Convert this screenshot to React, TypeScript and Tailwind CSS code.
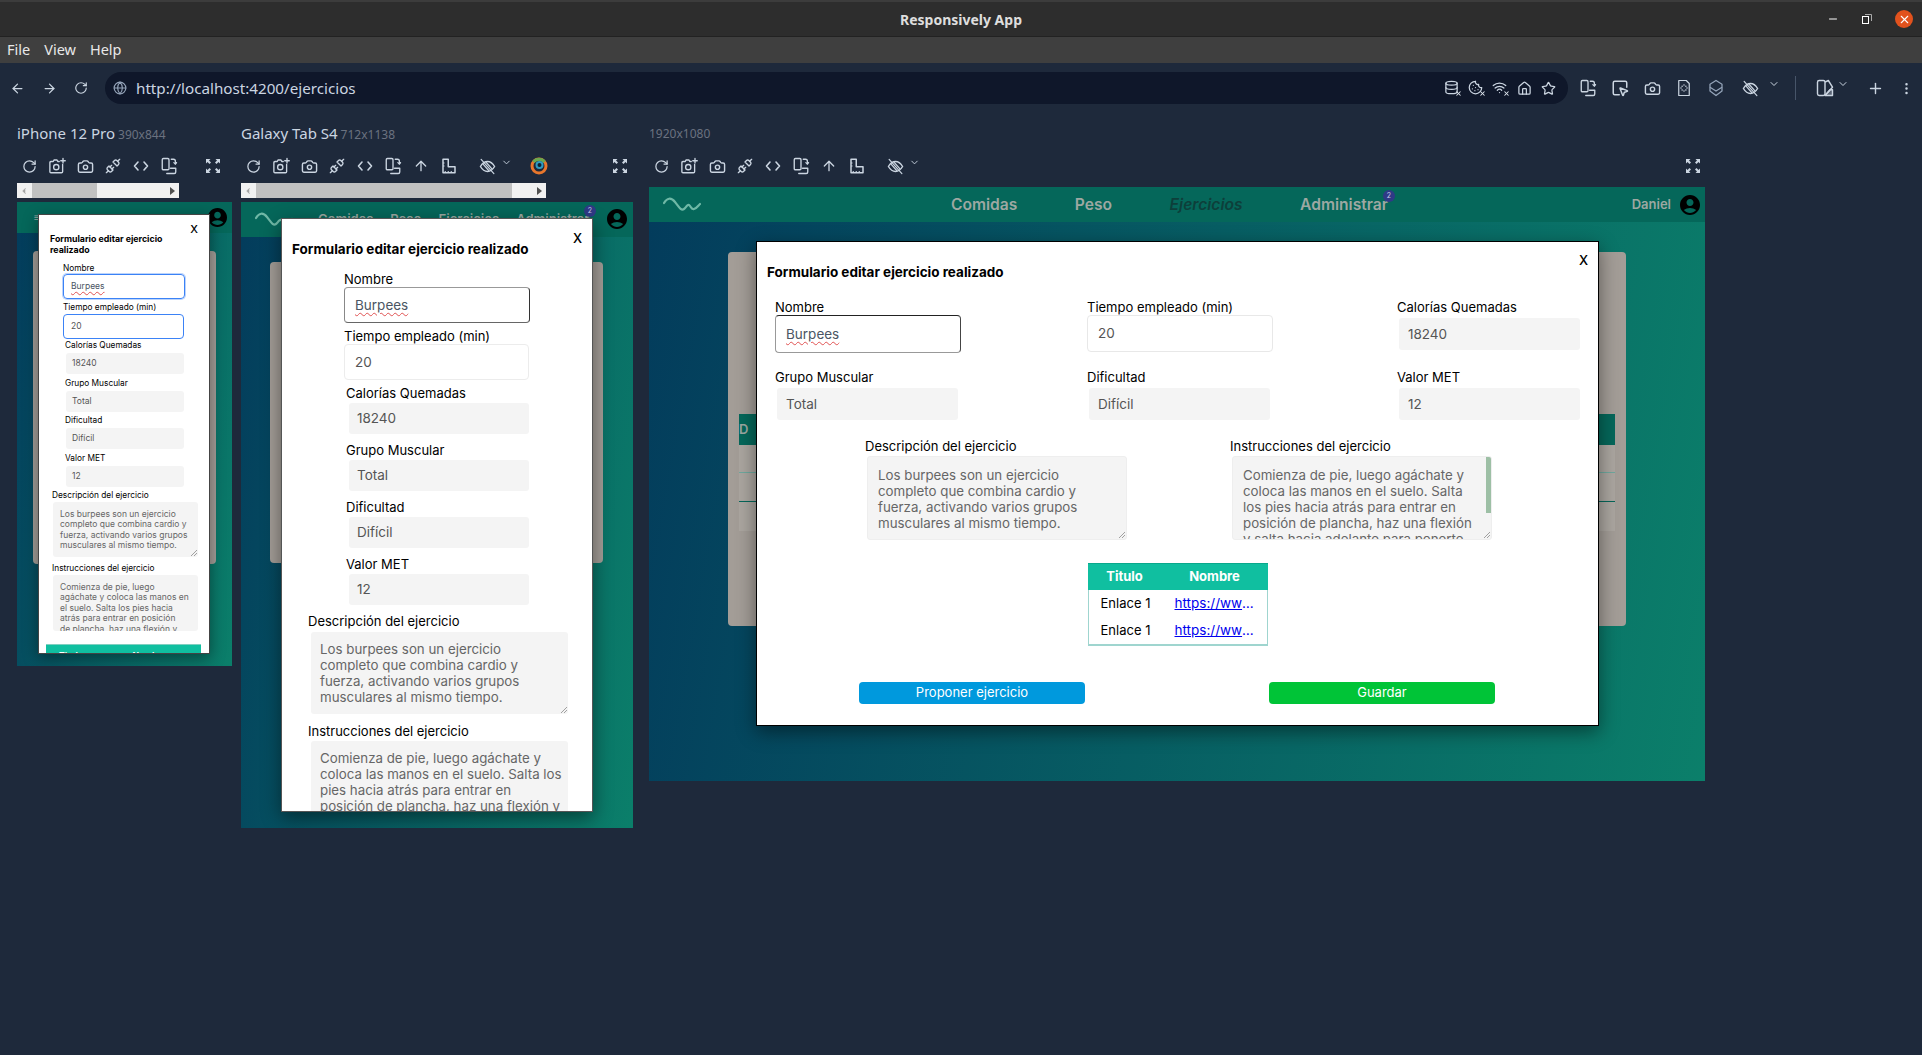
// @ts-nocheck
import { ArrowLeft, ArrowRight, RotateCw, Globe, Star, House, Camera, Unplug, ChevronDown, ChevronLeft, Plus, EllipsisVertical, ArrowUp, Database, Cookie, Wifi, SquareMousePointer, Minus, X } from "lucide-react"

const UI = "font-['Inter','Noto_Sans',sans-serif]"
const CHROME = "font-['Noto_Sans',sans-serif]"

function RotateIcon({ size = 18 }) {
  return (
    <svg width={size} height={size} viewBox="0 0 24 24" fill="none" stroke="currentColor" strokeWidth="1.8" strokeLinecap="round" strokeLinejoin="round">
      <rect x="3" y="2" width="9" height="15" rx="1.5" />
      <path d="M15 3h3a2.500 2.500 0 0 1 2.500 2.500V9" />
      <path d="M18.500 7.500 20.500 9.500 22 7.500" />
      <path d="M9 22h10a2 2 0 0 0 2-2v-5h-7" />
    </svg>
  )
}

function ShotIcon({ size = 18 }) {
  return (
    <svg width={size} height={size} viewBox="0 0 24 24" fill="none" stroke="currentColor" strokeWidth="1.8" strokeLinecap="round" strokeLinejoin="round">
      <path d="M15 6h-2l-1-2H8L7 6H4a1.500 1.500 0 0 0-1.500 1.500v12A1.500 1.500 0 0 0 4 21h14a1.500 1.500 0 0 0 1.500-1.500V10" />
      <circle cx="11" cy="13.500" r="3.500" />
      <path d="M20 2v6M17 5h6" />
    </svg>
  )
}

function RulerIcon({ size = 18 }) {
  return (
    <svg width={size} height={size} viewBox="0 0 24 24" fill="none" stroke="currentColor" strokeWidth="2" strokeLinejoin="round">
      <path d="M4 3h7v10h9v8H4z" />
      <path d="M7 21v-2.500M11 21v-2.500M15 21v-2.500M4 8h2M4 12h2" strokeWidth="1.500" />
    </svg>
  )
}

function CodeIcon() {
  return (
    <svg width="16" height="16" viewBox="0 0 16 16" fill="none" stroke="currentColor" strokeWidth="1.600" strokeLinecap="round" strokeLinejoin="round">
      <path d="M5 4 1.500 8 5 12M11 4l3.500 4-3.500 4" />
    </svg>
  )
}

function EyeHatch({ size = 17 }) {
  return (
    <svg width={size} height={size} viewBox="0 0 24 24" fill="none" stroke="currentColor" strokeWidth="2" strokeLinecap="round">
      <path d="M2 12c3-5 6.500-7 10-7s7 2 10 7c-3 5-6.500 7-10 7s-7-2-10-7z" />
      <path d="M3 2l18 20M6 9l8 9M10 6l8 9" strokeWidth="1.700" />
    </svg>
  )
}

function DocDots() {
  return (
    <svg width="18" height="18" viewBox="0 0 24 24" fill="none" stroke="currentColor" strokeWidth="1.600" strokeLinejoin="round">
      <path d="M5 2h10l4 4v16H5z" />
      <path d="M12 8v.01M12 16v.01M8 12v.01M16 12v.01M9.500 9.500v.01M14.500 9.500v.01M9.500 14.500v.01M14.500 14.500v.01" strokeWidth="2" strokeLinecap="round" />
    </svg>
  )
}

function StackIcon() {
  return (
    <svg width="18" height="18" viewBox="0 0 24 24" fill="none" stroke="#94a3b8" strokeWidth="1.700" strokeLinejoin="round">
      <path d="M12 2l8 5v4l-8 5-8-5V7z" />
      <path d="M4 11v5l8 6 8-6v-5" />
    </svg>
  )
}

function ThemeIcon() {
  return (
    <svg width="20" height="20" viewBox="0 0 24 24" fill="none" stroke="currentColor" strokeWidth="1.700" strokeLinejoin="round">
      <rect x="3" y="3" width="9" height="18" rx="2" />
      <path d="M12 5l4-2 5 8-9 10" />
      <path d="M12 21h9v-7h-3z" fill="currentColor" fillOpacity="0.350" />
    </svg>
  )
}

function XBadge({ icon: Icon }) {
  return (
    <span className="relative w-4 h-4 flex">
      <Icon size={15} />
      <X size={7} strokeWidth={3.500} className="absolute -right-[2px] -bottom-[1px] text-[#e2e8f0]" />
    </span>
  )
}

function Expand() {
  return (
    <svg width="14" height="14" viewBox="0 0 14 14" fill="#cbd5e1">
      <path d="M0 0h4.500L3 1.500l2 2L3.500 5l-2-2L0 4.500zM14 0v4.500L12.500 3l-2 2L9 3.500l2-2L9.500 0zM0 14V9.500L1.500 11l2-2L5 10.500l-2 2L4.500 14zM14 14H9.500l1.500-1.500-2-2L10.500 9l2 2L14 9.500z" />
    </svg>
  )
}

function ColorBlind() {
  return (
    <svg width="18" height="18" viewBox="0 0 18 18" fill="none" strokeWidth="3">
      <circle cx="9" cy="9" r="7" stroke="#e8762c" />
      <path d="M3.500 5A7 7 0 0 1 14.500 5" stroke="#6aa84f" />
      <circle cx="9.500" cy="8" r="3" stroke="#2f9bc2" strokeWidth="2" fill="#10202e" />
    </svg>
  )
}

function Avatar({ size }) {
  return (
    <svg width={size} height={size} viewBox="2 2 20 20" fill="#000">
      <path d="M12 2C6.480 2 2 6.480 2 12s4.480 10 10 10 10-4.480 10-10S17.520 2 12 2zm0 4c1.930 0 3.500 1.570 3.500 3.500S13.930 13 12 13s-3.500-1.570-3.500-3.500S10.070 6 12 6zm0 14c-2.030 0-4.430-.82-6.140-2.880C7.550 15.800 9.680 15 12 15s4.450.8 6.140 2.120C16.430 19.180 14.030 20 12 20z" />
    </svg>
  )
}

function Wave({ className }) {
  return (
    <svg className={className} width="38" height="18" viewBox="0 0 38 18" fill="none" stroke="#6fb8a6" strokeWidth="2.200" strokeLinecap="round">
      <path d="M1 7C4 2 8 1 12 6s6 9 9 7 3-5 5-4 2 5 5 4 4-3 6-5" />
    </svg>
  )
}

function DeviceTools({ extra, expandClass }) {
  const btn = "w-7 flex justify-center"
  return (
    <div className="h-[26px] flex items-center -ml-[2px] text-[#cbd5e1]">
      <span className={btn}><RotateCw size={15} /></span>
      <span className={btn}><ShotIcon /></span>
      <span className={btn}><Camera size={17} /></span>
      <span className={btn}><Unplug size={16} /></span>
      <span className={btn}><CodeIcon /></span>
      <span className={btn}><RotateIcon /></span>
      {extra}
      <span className={`ml-auto w-7 flex justify-center ${expandClass}`}><Expand /></span>
    </div>
  )
}

function ExtraTools({ color }) {
  return (
    <>
      <span className="w-7 flex justify-center"><ArrowUp size={16} /></span>
      <span className="w-7 flex justify-center"><RulerIcon /></span>
      <span className="w-[38px] pl-[10px] flex justify-center"><EyeHatch /></span>
      <ChevronDown size={11} className="-mt-2" />
      {color && <span className="ml-[18px] flex"><ColorBlind /></span>}
    </>
  )
}

function HScroll({ width, thumbLeft, thumbWidth }) {
  return (
    <div className={`${width} h-[15px] mt-1 mb-1 bg-[#f1f1f1] flex items-center`}>
      <ChevronLeft size={10} className="text-[#a3a3a3] fill-[#a3a3a3] ml-[2px] shrink-0" />
      <div className={`${thumbLeft} ${thumbWidth} h-full bg-[#c1c1c1] shrink-0`} />
      <span className="ml-auto mr-1 w-0 h-0 border-y-[4px] border-y-transparent border-l-[5px] border-l-[#505050]" />
    </div>
  )
}

function SiteNav({ children, height }) {
  return <div className={`${height} shrink-0 bg-[#05675a] flex items-center relative text-[#9da8a2]`}>{children}</div>
}

function Badge({ className }) {
  return <span className={`absolute w-3 h-3 rounded-full bg-[#2f3a86] text-[#c7cbe8] text-[7px] leading-3 text-center ${className}`}>2</span>
}

function Label({ children, className = "" }) {
  return <div className={`text-black leading-4 whitespace-nowrap ${className}`}>{children}</div>
}

function Edit({ children, className = "" }) {
  return <div className={`rounded-[3px] flex items-center text-[#555] whitespace-nowrap ${className}`}>{children}</div>
}

function Squiggle({ children }) {
  return <span className="underline decoration-wavy decoration-[#e05252] decoration-1 underline-offset-2 text-[#4b5563]">{children}</span>
}

function Grip() {
  return (
    <svg className="absolute right-[1px] bottom-[1px]" width="6" height="6" viewBox="0 0 6 6" stroke="#8a8a8a" strokeWidth="0.8">
      <path d="M6 0 0 6M6 3 3 6" />
    </svg>
  )
}

const DESC = "Los burpees son un ejercicio\ncompleto que combina cardio y\nfuerza, activando varios grupos\nmusculares al mismo tiempo."
const INST_PHONE = "Comienza de pie, luego\nagáchate y coloca las manos en\nel suelo. Salta los pies hacia\natrás para entrar en posición\nde plancha, haz una flexión y"
const INST_TABLET = "Comienza de pie, luego agáchate y\ncoloca las manos en el suelo. Salta los\npies hacia atrás para entrar en\nposición de plancha, haz una flexión y\nsalta hacia adelante para ponerte"
const INST_DESK = "Comienza de pie, luego agáchate y\ncoloca las manos en el suelo. Salta\nlos pies hacia atrás para entrar en\nposición de plancha, haz una flexión\ny salta hacia adelante para ponerte"

function PhoneForm() {
  const gray = "w-[118px] h-[21px] ml-[3px] mt-[1px] mb-[2.500px] bg-[#f4f4f4] pl-[6px] text-[8.500px]"
  const item = "text-[8.300px] ml-[2px] leading-[13px]"
  const area = "w-[145px] ml-[1px] px-[7px] pt-[7px] overflow-hidden bg-[#f4f4f4] rounded-[3px] text-[#666] text-[8.500px] leading-[10.400px] whitespace-pre"
  return (
    <div className="absolute left-[21px] top-[12px] w-[172px] h-[440px] overflow-hidden bg-white border border-[#444] shadow-[0_4px_14px_rgba(0,0,0,0.4)] flex flex-col pt-[18px]">
      <div className="relative pl-[11px] pr-[30px] font-bold text-[8.800px] leading-[11px] text-black">
        Formulario editar ejercicio realizado
        <span className="absolute right-[11px] -top-[9px] text-[11px] font-medium">X</span>
      </div>
      <div className="pl-[24px] mt-[7px] w-[148px] flex flex-col">
        <Label className="text-[8.300px] leading-[12px]">Nombre</Label>
        <Edit className="w-[122px] h-[25px] border border-[#3b82f6] ring-1 ring-[#bcd4fb] rounded-[4px] pl-[7px] text-[8.500px]"><Squiggle>Burpees</Squiggle></Edit>
        <Label className="text-[8.300px] leading-[14px] mt-[1px]">Tiempo empleado (min)</Label>
        <Edit className="w-[121px] h-[25px] border border-[#3b82f6] rounded-[4px] pl-[7px] text-[8.500px]">20</Edit>
        <Label className={item}>Calorías Quemadas</Label>
        <Edit className={gray}>18240</Edit>
        <Label className={item}>Grupo Muscular</Label>
        <Edit className={gray}>Total</Edit>
        <Label className={item}>Dificultad</Label>
        <Edit className={gray}>Difícil</Edit>
        <Label className={item}>Valor MET</Label>
        <Edit className={gray}>12</Edit>
      </div>
      <div className="pl-[13px] flex flex-col">
        <Label className="text-[8.300px] leading-[13px]">Descripción del ejercicio</Label>
        <div className={`relative h-[55px] ${area}`}>
          {DESC}
          <Grip />
        </div>
        <Label className="text-[8.300px] leading-[13px] mt-[5px]">Instrucciones del ejercicio</Label>
        <div className={`h-[56px] ${area}`}>{INST_PHONE}</div>
      </div>
      <div className="ml-[7px] mt-[13px] w-[155px] grid grid-cols-2 bg-[#10bfa0] border-t border-[#7fcfc0] text-white font-bold text-[8.500px] h-6 shrink-0">
        <span className="pl-[13px] pt-[5px]">Titulo</span>
        <span className="pl-[9px] pt-[5px]">Nombre</span>
      </div>
    </div>
  )
}

function TabletForm() {
  const gray = "w-[180px] h-[31px] ml-[5px] mt-[2px] mb-2 bg-[#f4f4f4] pl-[8px] text-[13.500px]"
  const area = "w-[257px] h-[82px] ml-[3px] px-[9px] pt-[9px] bg-[#f4f4f4] rounded-[3px] text-[#666] text-[13.300px] leading-4 whitespace-pre"
  return (
    <div className="absolute left-[40px] top-[16px] w-[312px] h-[594px] overflow-hidden bg-white border border-[#555] shadow-[0_6px_18px_rgba(0,0,0,0.45)] flex flex-col pt-[22px]">
      <div className="relative pl-[10px] font-bold text-[13.500px] leading-4 text-black whitespace-nowrap">
        Formulario editar ejercicio realizado
        <span className="absolute right-[10px] -top-[11px] text-[13px] font-medium">X</span>
      </div>
      <div className="pl-[62px] mt-[14px] flex flex-col text-[13px]">
        <Label>Nombre</Label>
        <Edit className="w-[186px] h-[36px] border border-[#e5e5e5] border-b-[#666] border-r-[#333] border-l-[#888] border-t-[#999] rounded-[4px] pl-[10px] text-[13.500px]"><Squiggle>Burpees</Squiggle></Edit>
        <Label className="mt-[5px]">Tiempo empleado (min)</Label>
        <Edit className="w-[185px] h-[36px] border border-[#ececec] rounded-[4px] pl-[10px] mb-[5px] text-[13.500px]">20</Edit>
        <Label className="ml-[2px]">Calorías Quemadas</Label>
        <Edit className={gray}>18240</Edit>
        <Label className="ml-[2px]">Grupo Muscular</Label>
        <Edit className={gray}>Total</Edit>
        <Label className="ml-[2px]">Dificultad</Label>
        <Edit className={gray}>Difícil</Edit>
        <Label className="ml-[2px]">Valor MET</Label>
        <Edit className={gray}>12</Edit>
      </div>
      <div className="pl-[26px] flex flex-col text-[13px]">
        <Label>Descripción del ejercicio</Label>
        <div className={`relative mt-[3px] ${area}`}>
          {DESC}
          <Grip />
        </div>
        <Label className="mt-[9px]">Instrucciones del ejercicio</Label>
        <div className={`mt-[2px] overflow-hidden ${area}`}>{INST_TABLET}</div>
      </div>
    </div>
  )
}

function DeskCell({ label, children, className = "" }) {
  return (
    <div className={`flex flex-col ${className}`}>
      <Label>{label}</Label>
      {children}
    </div>
  )
}

function LinkRow() {
  return (
    <div className="grid grid-cols-[74px_1fr] h-[27px] items-center">
      <span className="text-center text-black">Enlace 1</span>
      <a className="text-[#0000ee] underline truncate pl-3 pr-[6px] text-[13.500px]">https://www.youtube.com</a>
    </div>
  )
}

function DesktopForm() {
  const gray = "w-[181px] h-[32px] ml-[2px] mt-[3px] bg-[#f4f4f4] pl-[9px] text-[13.500px]"
  const area = "relative w-[260px] h-[84px] ml-[2px] mt-[2px] px-[10px] pt-[10px] bg-[#f4f4f4] border border-[#eee] rounded-[3px] text-[#666] text-[13.300px] leading-4 overflow-hidden whitespace-pre"
  return (
    <div className="absolute left-[107px] top-[54px] w-[843px] h-[485px] bg-white border border-black shadow-[0_6px_18px_rgba(0,0,0,0.45)] flex flex-col pt-[22px] text-[13px]">
      <div className="relative pl-[10px] font-bold text-[13.500px] leading-4 text-black">
        Formulario editar ejercicio realizado
        <span className="absolute right-[10px] -top-[12px] text-[13px] font-medium">X</span>
      </div>
      <div className="pl-[18px] mt-[19px] grid grid-cols-[312px_310px_1fr] gap-y-[16px]">
        <DeskCell label="Nombre">
          <Edit className="w-[186px] h-[38px] border border-[#999] border-t-[#222] border-r-[#444] rounded-[4px] pl-[10px] text-[13.500px]"><Squiggle>Burpees</Squiggle></Edit>
        </DeskCell>
        <DeskCell label="Tiempo empleado (min)">
          <Edit className="w-[186px] h-[37px] border border-[#e8e8e8] rounded-[4px] pl-[10px] text-[13.500px]">20</Edit>
        </DeskCell>
        <DeskCell label="Calorías Quemadas"><Edit className={gray}>18240</Edit></DeskCell>
        <DeskCell label="Grupo Muscular"><Edit className={gray}>Total</Edit></DeskCell>
        <DeskCell label="Dificultad"><Edit className={gray}>Difícil</Edit></DeskCell>
        <DeskCell label="Valor MET"><Edit className={gray}>12</Edit></DeskCell>
      </div>
      <div className="pl-[108px] mt-[18px] grid grid-cols-[365px_1fr]">
        <DeskCell label="Descripción del ejercicio">
          <div className={area}>{DESC}<Grip /></div>
        </DeskCell>
        <DeskCell label="Instrucciones del ejercicio">
          <div className={area}>
            {INST_DESK}
            <span className="absolute right-0 top-0 w-[5px] h-[56px] bg-[#9dbfa5]" />
            <Grip />
          </div>
        </DeskCell>
      </div>
      <div className="self-center mt-[23px] w-[180px] border-x border-b-2 border-[#9fd5cf]">
        <div className="grid grid-cols-[74px_1fr] h-[27px] bg-[#10bfa0] border-t border-[#0aa88c] -mx-px items-center text-white font-bold">
          <span className="text-center">Titulo</span>
          <span className="text-center">Nombre</span>
        </div>
        <LinkRow />
        <LinkRow />
      </div>
      <div className="pl-[102px] mt-[36px] flex gap-[184px]">
        <button className="w-[226px] h-[22px] rounded-[4px] bg-[#0099dd] text-white">Proponer ejercicio</button>
        <button className="w-[226px] h-[22px] rounded-[4px] bg-[#00c437] text-white">Guardar</button>
      </div>
    </div>
  )
}

const BODY = "flex-1 bg-[linear-gradient(100deg,#033c5c,#0b7f6a)]"

export default function App() {
  const main = "w-8 flex justify-center"
  return (
    <div className={`h-[1055px] w-[1922px] overflow-hidden bg-[#1e293b] flex flex-col ${UI}`}>
      <div className="relative h-[37px] shrink-0 bg-[#2d2d2d] border-t-2 border-[#3c3c3c] border-b border-b-[#222] flex items-center justify-center">
        <span className={`${CHROME} font-bold text-[14px] text-[#dedede]`}>Responsively App</span>
        <div className="absolute right-[9px] top-[8px] flex items-center text-white">
          <Minus size={12} className="mr-[23px]" />
          <svg className="mr-[23px]" width="10" height="10" viewBox="0 0 10 10" fill="none" stroke="#fff">
            <rect x="0.500" y="2.500" width="6" height="7" />
            <path d="M3 .5h6.500V7" stroke="#aaa" />
          </svg>
          <span className="w-[18px] h-[18px] rounded-full bg-[#e2521d] flex items-center justify-center"><X size={13} /></span>
        </div>
      </div>
      <div className={`${CHROME} h-[26px] shrink-0 bg-[#3f3f3f] flex items-center pl-[7px] gap-[14px] text-[14.500px] text-[#e8e8e8]`}>
        <span>File</span><span>View</span><span>Help</span>
      </div>

      <div className="h-[49px] pt-[1px] shrink-0 flex items-center text-[#cbd5e1]">
        <div className="pl-[1px] flex">
          <span className={main}><ArrowLeft size={15} /></span>
          <span className={main}><ArrowRight size={15} /></span>
          <span className={main}><RotateCw size={14} /></span>
        </div>
        <div className="ml-[8px] w-[1463px] h-8 rounded-full bg-[#0f172a] flex items-center pl-[8px] pr-[12px]">
          <Globe size={14} className="text-[#94a3b8]" />
          <span className={`${CHROME} ml-[9px] text-[15.200px]`}>http://localhost:4200/ejercicios</span>
          <div className="ml-auto flex items-center gap-[8px]">
            <XBadge icon={Database} />
            <XBadge icon={Cookie} />
            <XBadge icon={Wifi} />
            <span className="w-4 flex justify-center"><House size={15} /></span>
            <span className="w-4 flex justify-center"><Star size={15} /></span>
          </div>
        </div>
        <div className="ml-[4px] flex items-center">
          <span className={main}><RotateIcon /></span>
          <span className={main}><SquareMousePointer size={18} /></span>
          <span className={main}><Camera size={17} /></span>
          <span className={main}><DocDots /></span>
          <span className={main}><StackIcon /></span>
          <span className="w-[36px] flex justify-center"><EyeHatch /></span>
          <ChevronDown size={12} className="-mt-2" />
          <span className="ml-[15px] w-px h-6 bg-[#475569]" />
          <span className="ml-[17px] w-6 flex justify-center"><ThemeIcon /></span>
          <ChevronDown size={12} className="-mt-2" />
          <span className="ml-[18px]"><Plus size={17} /></span>
          <span className="ml-[15px]"><EllipsisVertical size={15} /></span>
        </div>
      </div>

      <div className="flex items-start pl-[17px] pt-[12px]">
        <div className="w-[215px] shrink-0 mr-[9px]">
          <div className={`${CHROME} h-[18px] -mt-[2px] flex items-baseline whitespace-nowrap`}>
            <span className="text-[#cbd5e1] text-[15px]">iPhone 12 Pro</span>
            <span className="ml-[3px] text-[#6b7280] text-[12px]">390x844</span>
          </div>
          <div className="mt-[13px]"><DeviceTools expandClass="mr-[5px]" /></div>
          <HScroll width="w-[162px]" thumbLeft="ml-[3px]" thumbWidth="w-[65px]" />
          <div className="relative h-[464px] overflow-hidden flex flex-col">
            <SiteNav height="h-[31px]">
              <span className="ml-[17px] text-[10px]">≡</span>
              <span className="absolute right-[5px] top-[6px]"><Avatar size={19} /></span>
            </SiteNav>
            <div className={`${BODY} pt-[18px] px-[16px]`}>
              <div className="w-[183px] h-[313px] rounded-[4px] bg-[#a39d97]" />
            </div>
            <PhoneForm />
          </div>
        </div>

        <div className="w-[392px] shrink-0 mr-[16px]">
          <div className={`${CHROME} h-[18px] -mt-[2px] flex items-baseline whitespace-nowrap`}>
            <span className="text-[#cbd5e1] text-[15px]">Galaxy Tab S4</span>
            <span className="ml-[3px] text-[#6b7280] text-[12px]">712x1138</span>
          </div>
          <div className="mt-[13px]"><DeviceTools extra={<ExtraTools color />} expandClass="-mr-[1px]" /></div>
          <HScroll width="w-[305px]" thumbLeft="ml-[3px]" thumbWidth="w-[256px]" />
          <div className="relative h-[626px] overflow-hidden flex flex-col">
            <SiteNav height="h-[35px]">
              <Wave className="ml-[14px]" />
              <span className="ml-[25px] flex gap-[17px] text-[13px] font-semibold whitespace-nowrap"><span>Comidas</span><span>Peso</span><span>Ejercicios</span><span>Administrar</span></span>
              <Badge className="right-[37px] top-[3px]" />
              <span className="absolute right-[6px] top-[7px]"><Avatar size={20} /></span>
            </SiteNav>
            <div className={`${BODY} pt-[25px] px-[29px]`}>
              <div className="w-[333px] h-[301px] rounded-[4px] bg-[#a39d97]" />
            </div>
            <TabletForm />
          </div>
        </div>

        <div className="w-[1056px] shrink-0">
          <div className={`${CHROME} h-[20px] -mt-[1px] flex items-end`}>
            <span className="text-[#6b7280] text-[12px]">1920x1080</span>
          </div>
          <div className="mt-[10px]"><DeviceTools extra={<ExtraTools />} expandClass="-mr-[2px]" /></div>
          <div className="relative h-[594px] mt-[8px] overflow-hidden flex flex-col">
            <SiteNav height="h-[35px]">
              <Wave className="ml-[14px]" />
              <nav className="ml-[250px] flex gap-[57.500px] text-[15.600px] font-semibold whitespace-nowrap">
                <span>Comidas</span><span>Peso</span><span className="italic text-[#0d3f3a]">Ejercicios</span><span>Administrar</span>
              </nav>
              <Badge className="left-[734px] top-[3px]" />
              <span className="ml-auto text-[13px] font-semibold">Daniel</span>
              <span className="ml-[9px] mr-[5px] flex"><Avatar size={20} /></span>
            </SiteNav>
            <div className={`${BODY} pt-[30px] px-[79px]`}>
              <div className="w-[898px] h-[374px] rounded-[4px] bg-[#a39d97] pt-[162px] px-[11px]">
                <div className="h-[31px] bg-[#05675a] text-[#9da8a2] font-semibold text-[13px] leading-[31px]">D</div>
                <div className="bg-[#aba6a0]">
                  <div className="h-[28px] border-b border-[#6fa89e]" />
                  <div className="h-[29px] border-b border-[#05675a]" />
                  <div className="h-[29px]" />
                </div>
              </div>
            </div>
            <DesktopForm />
          </div>
        </div>
      </div>
    </div>
  )
}
